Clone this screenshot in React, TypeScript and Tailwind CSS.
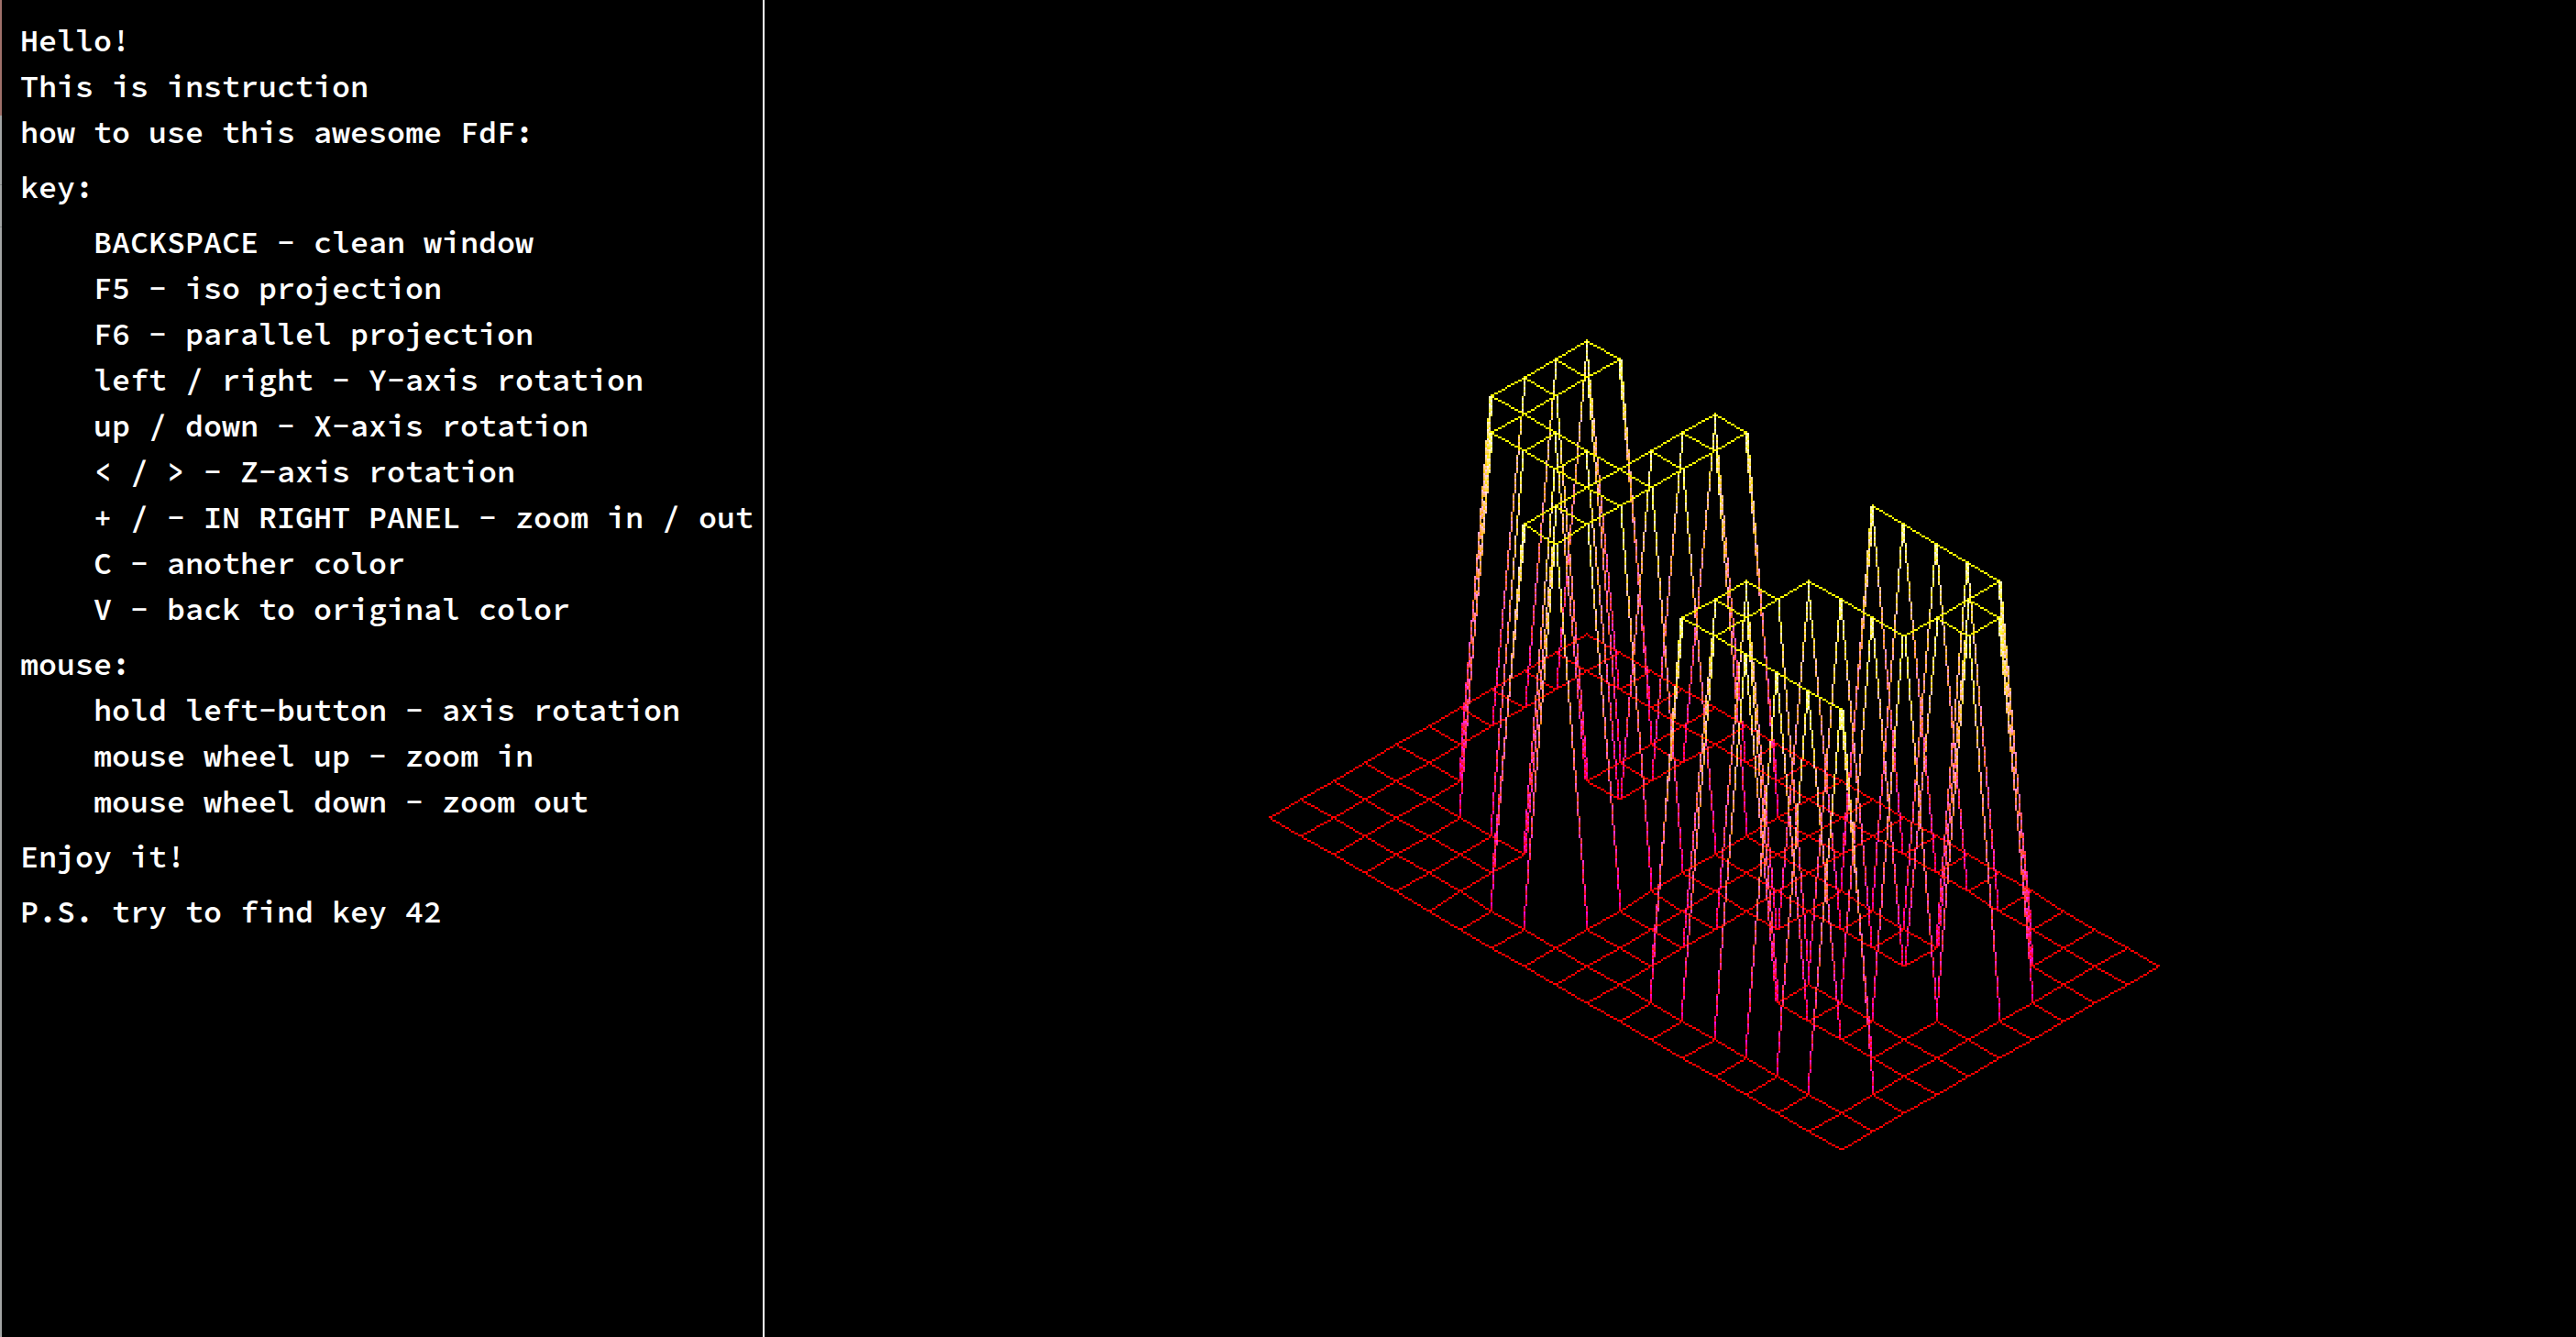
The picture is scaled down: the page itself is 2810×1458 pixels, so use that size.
import React from "react";

type Line = { text: string; indent?: boolean; gap?: boolean };

const LINES: Line[] = [
  { text: "Hello!" },
  { text: "This is instruction" },
  { text: "how to use this awesome FdF:" },
  { text: "key:", gap: true },
  { text: "BACKSPACE - clean window", indent: true, gap: true },
  { text: "F5 - iso projection", indent: true },
  { text: "F6 - parallel projection", indent: true },
  { text: "left / right - Y-axis rotation", indent: true },
  { text: "up / down - X-axis rotation", indent: true },
  { text: "< / > - Z-axis rotation", indent: true },
  { text: "+ / - IN RIGHT PANEL - zoom in / out", indent: true },
  { text: "C - another color", indent: true },
  { text: "V - back to original color", indent: true },
  { text: "mouse:", gap: true },
  { text: "hold left-button - axis rotation", indent: true },
  { text: "mouse wheel up - zoom in", indent: true },
  { text: "mouse wheel down - zoom out", indent: true },
  { text: "Enjoy it!", gap: true },
  { text: "P.S. try to find key 42", gap: true },
];

// Height map: "#" is a raised point, "." lies on the ground.
const MAP = [
  "...................",
  "...................",
  "..##..##...#####...",
  "..##..##.......##..",
  "..##..##.......##..",
  "..######....####...",
  "...#####...##......",
  "......##...##......",
  "......##...######..",
  "...................",
  "...................",
];

const LEFT = 417; // left edge of the drawing area, in logical pixels
const WIDTH = 988;
const HEIGHT = 729;

const raised = (x: number, y: number) => MAP[y][x] === "#";

function project(x: number, y: number): [number, number] {
  const sum = x + y;
  const px = Math.floor(865.74 + 17.3205 * (x - y));
  const py = 345 + 10 * sum + (sum >= 15 ? 1 : 0) - (raised(x, y) ? 200 : 0);
  return [px - LEFT, py];
}

const GROUND = 0xff0000;
const TOP = 0xffff00;

function buildPixels() {
  const pixels = new Map<number, number>();

  const line = (ax: number, ay: number, bx: number, by: number) => {
    const [x0, y0] = project(ax, ay);
    const [x1, y1] = project(bx, by);
    const c0 = raised(ax, ay) ? TOP : GROUND;
    const c1 = raised(bx, by) ? TOP : GROUND;
    const dx = Math.abs(x1 - x0);
    const dy = Math.abs(y1 - y0);
    const sx = Math.sign(x1 - x0);
    const sy = Math.sign(y1 - y0);
    const steps = Math.max(dx, dy);
    for (let i = 0; i <= steps; i++) {
      const x = x0 + sx * Math.ceil((i * dx) / steps);
      const y = y0 + sy * Math.ceil((i * dy) / steps);
      pixels.set(y * WIDTH + x, Math.trunc(c0 + ((c1 - c0) * i) / steps));
    }
  };

  for (let y = 0; y < MAP.length; y++) {
    for (let x = 0; x < MAP[y].length; x++) {
      if (x + 1 < MAP[y].length) line(x, y, x + 1, y);
      if (y + 1 < MAP.length) line(x, y, x, y + 1);
    }
  }

  const byColor = new Map<number, string[]>();
  pixels.forEach((color, key) => {
    const list = byColor.get(color) ?? [];
    list.push(`M${key % WIDTH} ${Math.floor(key / WIDTH)}h1v1h-1z`);
    byColor.set(color, list);
  });
  return Array.from(byColor, ([color, list]) => ({
    fill: "#" + color.toString(16).padStart(6, "0"),
    d: list.join(""),
  }));
}

const PATHS = buildPixels();

function Wireframe() {
  return (
    <svg
      className="block h-[1458px] w-[1976px] shrink-0"
      viewBox={`0 0 ${WIDTH} ${HEIGHT}`}
      shapeRendering="crispEdges"
      role="img"
      aria-label="42 wireframe"
    >
      {PATHS.map((p) => (
        <path key={p.fill} fill={p.fill} d={p.d} />
      ))}
    </svg>
  );
}

function Instructions() {
  return (
    <section className="w-[830px] shrink-0 pt-[19px] pl-5 font-['Source_Code_Pro','Liberation_Mono',monospace] text-[33.333px] leading-[50px] font-semibold whitespace-pre text-white">
      {LINES.map((l) => (
        <p key={l.text} className={`${l.indent ? "pl-20" : ""} ${l.gap ? "mt-2.5" : ""}`}>
          {l.text}
        </p>
      ))}
    </section>
  );
}

export default function App() {
  return (
    <main className="flex h-[1458px] w-[2810px] overflow-hidden bg-black">
      <div className="flex w-0.5 shrink-0 flex-col">
        <div className="h-[126px] bg-[#a0706a]" />
        <div className="h-[75px] bg-[#a3a6a6]" />
        <div className="h-px bg-[#858888]" />
        <div className="h-[45px] bg-[#a3a6a6]" />
        <div className="h-px bg-[#858888]" />
        <div className="grow bg-[#a3a6a6]" />
      </div>
      <Instructions />
      <div className="w-0.5 shrink-0 bg-white" />
      <Wireframe />
    </main>
  );
}
